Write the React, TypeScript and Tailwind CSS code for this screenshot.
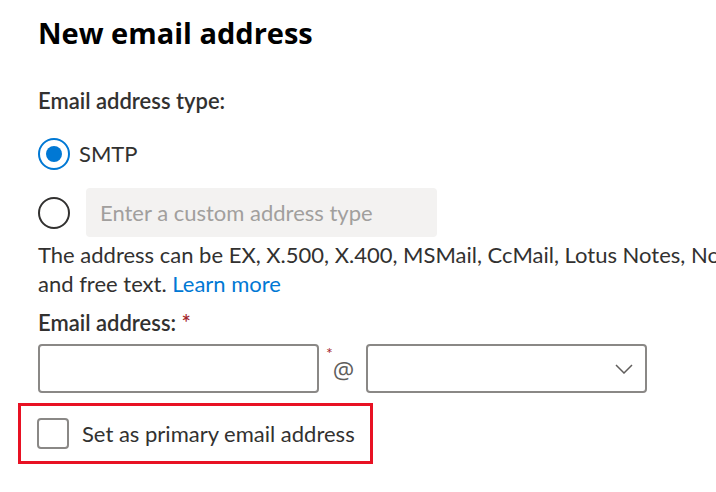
import React from "react";

export default function App() {
  return (
    <div
      className="w-[716px] h-[492px] overflow-hidden bg-white text-[#323130]"
      style={{ fontFamily: '"Segoe UI", Lato, "Noto Sans", sans-serif' }}
    >
      <div className="w-[900px] pl-[38px] pt-[13px]">
        <h1
          className="text-[29px] leading-[40px] font-bold text-black"
          style={{ fontFamily: '"Segoe UI", "Open Sans", sans-serif' }}
        >
          New email address
        </h1>

        <div className="mt-[34px] text-[22px] leading-[28px] font-semibold">Email address type:</div>

        <div className="mt-[23px] flex items-center gap-[9px] h-[32px]">
          <span className="w-[32px] h-[32px] rounded-full border-2 border-[#0078d4] flex items-center justify-center">
            <span className="w-[16px] h-[16px] rounded-full bg-[#0078d4]" />
          </span>
          <span className="text-[22px] leading-[28px]">SMTP</span>
        </div>

        <div className="mt-[18px] flex items-center gap-[16px]">
          <span className="w-[32px] h-[32px] rounded-full border-2 border-[#323130] shrink-0" />
          <div className="w-[351px] h-[49px] rounded-[4px] bg-[#f3f2f1] flex items-center px-[14px] text-[22px] text-[#a19f9d]">
            Enter a custom address type
          </div>
        </div>

        <p className="mt-[3px] text-[22px] leading-[29px] whitespace-nowrap">
          The address can be EX, X.500, X.400, MSMail, CcMail, Lotus Notes, Novell GroupWise,
          <br />
          and free text. <span className="text-[#0078d4]">Learn more</span>
        </p>

        <div className="mt-[11px] text-[22px] leading-[28px] font-semibold">
          Email address: <span className="text-[#a4262c]">*</span>
        </div>

        <div className="mt-[7px] flex items-center">
          <div className="w-[281px] h-[49px] rounded-[4px] border-2 border-[#8a8886]" />
          <div className="relative w-[47px] h-[49px] flex items-center justify-center">
            <span className="absolute left-[7px] top-[-3px] text-[16px] text-[#a4262c]">*</span>
            <span
              className="text-[24px] leading-[30px] text-[#605e5c] mt-[2px] ml-[2px]"
              style={{ fontFamily: '"Open Sans", sans-serif' }}
            >
              @
            </span>
          </div>
          <div className="w-[281px] h-[49px] rounded-[4px] border-2 border-[#8a8886] flex items-center justify-end pr-[12px]">
            <svg width="18" height="10" viewBox="0 0 18 10" fill="none">
              <path d="M1 1l8 8 8-8" stroke="#605e5c" strokeWidth="1.5" />
            </svg>
          </div>
        </div>

        <div className="mt-[10px] ml-[-20px] w-[355px] h-[61px] border-[3px] border-[#e81123] flex items-center gap-[13px] pl-[16px]">
          <span className="w-[32px] h-[31px] rounded-[4px] border-2 border-[#8a8886]" />
          <span className="text-[22px] leading-[28px]">Set as primary email address</span>
        </div>
      </div>
    </div>
  );
}
